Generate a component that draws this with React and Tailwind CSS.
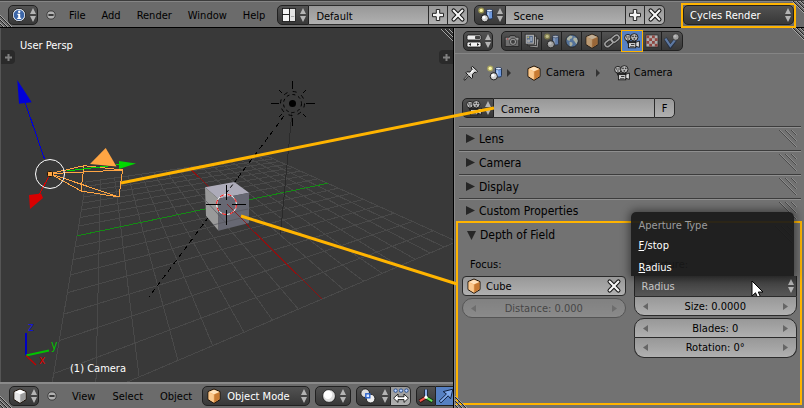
import React from 'react';

/* ---------- icons ---------- */

function Icon({ children, className = '' }) {
  return (
    <svg viewBox="0 0 16 16" className={`h-4 w-4 shrink-0 ${className}`} aria-hidden="true">
      {children}
    </svg>
  );
}

const InfoIcon = () => (
  <Icon>
    <circle cx="8" cy="8" r="6.6" fill="#e8edf5" stroke="#111" strokeWidth="0.8" />
    <circle cx="8" cy="8" r="5.3" fill="#3c66a8" />
    <path d="M6.4 6.8h2.8v4h1v1.2H6.2v-1.2h1V8h-.8z" fill="#fff" />
    <circle cx="8.2" cy="4.8" r="1.2" fill="#fff" />
  </Icon>
);

const LayoutIcon = () => (
  <Icon>
    <rect x="1.5" y="1.5" width="7" height="6" fill="#f4f4f4" stroke="#111" strokeWidth="0.8" />
    <rect x="1.5" y="7.5" width="7" height="7" fill="#f4f4f4" stroke="#111" strokeWidth="0.8" />
    <rect x="8.5" y="1.5" width="6" height="13" fill="#e4e4e4" stroke="#111" strokeWidth="0.8" />
    <path d="M10 9.500h3.200" stroke="#aaa" />
  </Icon>
);

const SceneIcon = () => (
  <Icon>
    <rect x="8.5" y="2.6" width="6" height="9.4" rx="1.5" fill="#6f9ade" stroke="#1b2b4a" strokeWidth="0.9" />
    <rect x="9.4" y="4.4" width="1.8" height="6.6" fill="#a9c5f2" />
    <ellipse cx="11.5" cy="3.6" rx="2.8" ry="1.2" fill="#dce9ff" stroke="#1b2b4a" strokeWidth="0.5" />
    <circle cx="6.8" cy="11.3" r="3.6" fill="#d2d2d2" stroke="#111" strokeWidth="0.9" />
    <circle cx="5.9" cy="10.2" r="1.5" fill="#fff" />
    <circle cx="3.2" cy="3.4" r="3" fill="#d8cf52" opacity="0.55" />
    <circle cx="3.2" cy="3.4" r="1.7" fill="#fbf6a8" />
  </Icon>
);

const CubeIcon = ({ gray = false }) => (
  <Icon>
    <path d="M8 1 14 3.6V11.6L8 15.3 2 11.6V3.6z" fill={gray ? '#ddd' : '#f2b067'} stroke="#1d1208" strokeWidth="1" strokeLinejoin="round" />
    <path d="M8 1.7 13.3 4 8 6.3 2.7 4z" fill={gray ? '#fff' : '#ffe3bd'} />
    <path d="M13.4 4.3V11.3L8.3 14.5V6.6z" fill={gray ? '#9c9c9c' : '#c77a33'} />
    <path d="M2.6 4.3V11.3L7.7 14.5V6.6z" fill={gray ? '#e6e6e6' : '#fbc98e'} />
  </Icon>
);

const MovieIcon = () => (
  <Icon>
    <g stroke="#151515" strokeWidth="0.9">
      <path d="M3 8.4h9v4.4H5.4z" fill="#8b8b8b" />
      <circle cx="3.9" cy="4.7" r="3.3" fill="#b9b9b9" />
      <circle cx="10.3" cy="4.3" r="3.7" fill="#b9b9b9" />
      <path d="M11 9.6 15.4 8v6.4L11 13z" fill="#dcdcdc" />
      <rect x="4.4" y="9.6" width="7.4" height="5.2" fill="#cfcfcf" />
    </g>
    <g fill="#3a3a3a">
      <circle cx="2.8" cy="4" r="0.8" /><circle cx="5" cy="4" r="0.8" /><circle cx="3.9" cy="6" r="0.8" />
      <circle cx="9" cy="3.3" r="0.9" /><circle cx="11.7" cy="3.3" r="0.9" /><circle cx="10.3" cy="5.8" r="0.9" />
      <path d="M7 11h3.4v1H7zM6 13h4.4v.8H6z" />
    </g>
  </Icon>
);

const PhotoCameraIcon = () => (
  <Icon>
    <path d="M1.2 4.3h4l1-1.8h4.6l1 1.8h3v9.2H1.2z" fill="#8a8a8a" stroke="#181818" strokeWidth="0.9" />
    <rect x="1.8" y="4.8" width="12.6" height="2" fill="#c4c4c4" />
    <circle cx="9" cy="8.8" r="3.6" fill="#ccc" stroke="#222" strokeWidth="0.8" />
    <circle cx="9" cy="8.8" r="2" fill="#3b3b3b" />
    <rect x="2.8" y="5.4" width="1.6" height="1.2" fill="#d33" />
  </Icon>
);

const LayersIcon = () => (
  <Icon>
    <rect x="6" y="5.5" width="8.6" height="9" fill="#c7c7c7" stroke="#222" strokeWidth="0.9" transform="rotate(6 10 10)" />
    <rect x="3.6" y="3.2" width="8.8" height="9.4" fill="#d9d9d9" stroke="#222" strokeWidth="0.9" />
    <rect x="1.2" y="1.2" width="9.2" height="10" fill="#e8e8e8" stroke="#222" strokeWidth="0.9" />
    <rect x="2.8" y="2.8" width="6" height="6.8" fill="#5f7fae" />
    <circle cx="4.6" cy="7.8" r="1.6" fill="#ddd" />
    <circle cx="4.2" cy="4.3" r="1" fill="#e6dc7a" />
    <rect x="6.2" y="4" width="1.8" height="4" fill="#b9cff0" />
  </Icon>
);

const WorldIcon = () => (
  <Icon>
    <circle cx="8" cy="8" r="6.2" fill="#5d8cc8" stroke="#161616" strokeWidth="0.9" />
    <path d="M3 5.2 6 2.6l2.6.6-.6 2-2 .8-.4 2L3.2 7zM5.5 8.800l2.700.8.4 1.800-1.600 2.200-1.300-.8zM9.800 4.400l3 .6 1 3-1.400 3.200-1.800-2.600L9.200 7z" fill="#e2ead2" />
  </Icon>
);

const ChainIcon = () => (
  <Icon>
    <g fill="none" strokeLinecap="round">
      <rect x="0.6" y="7.6" width="8.4" height="5" rx="2.5" stroke="#1c1c1c" strokeWidth="3" transform="rotate(-38 4.8 10.1)" />
      <rect x="7" y="3.2" width="8.4" height="5" rx="2.5" stroke="#1c1c1c" strokeWidth="3" transform="rotate(-38 11.2 5.7)" />
      <rect x="0.6" y="7.6" width="8.4" height="5" rx="2.5" stroke="#d4d4d4" strokeWidth="1.5" transform="rotate(-38 4.8 10.1)" />
      <rect x="7" y="3.2" width="8.4" height="5" rx="2.5" stroke="#d4d4d4" strokeWidth="1.5" transform="rotate(-38 11.2 5.7)" />
    </g>
  </Icon>
);

const CheckerIcon = () => (
  <Icon>
    <rect x="2" y="2" width="12" height="12" fill="#e6e6e6" stroke="#222" strokeWidth="0.8" />
    <g fill="#b8473f">
      {[0, 1, 2, 3].map((r) => [0, 1].map((c) => (
        <rect key={`${r}-${c}`} x={2.4 + (c * 2 + (r % 2)) * 2.8} y={2.4 + r * 2.8} width="2.8" height="2.8" />
      )))}
    </g>
  </Icon>
);

const PhysicsIcon = () => (
  <Icon>
    <path d="M1.2 5.2 6.4 13.6 12 6" fill="none" stroke="#1b2a44" strokeWidth="3.6" />
    <path d="M1.4 5.6 6.4 13 11.6 6.4" fill="none" stroke="#6d97d6" strokeWidth="2.2" />
    <circle cx="11.8" cy="4" r="3.3" fill="#cfcfcf" stroke="#222" strokeWidth="0.8" />
    <circle cx="11" cy="3.2" r="1.3" fill="#f4f4f4" />
  </Icon>
);

const PropertiesIcon = () => (
  <Icon>
    <rect x="1" y="2" width="14" height="5" rx="1.5" fill="#eee" stroke="#111" strokeWidth="0.8" />
    <rect x="9" y="3" width="5.2" height="3" rx="0.8" fill="#444" />
    <rect x="1" y="9" width="14" height="5" rx="1.5" fill="#f4f4f4" stroke="#111" strokeWidth="0.8" />
    <path d="M5 9.9v3.2L2.6 11.5zM11 9.9v3.2l2.4-1.6z" fill="#222" />
  </Icon>
);

const PinIcon = () => (
  <Icon>
    <path d="M1 15 5.6 9.8" stroke="#161616" strokeWidth="2" />
    <path d="M9.4 1.4 14.6 6.2 13.2 7.6 12 7 9.4 9.4 9.6 12.6 8.4 13.4 2.8 7.8 3.8 6.8 7 7 9.2 4.4 8.2 2.8z" fill="#d8d8d8" stroke="#161616" strokeWidth="1" strokeLinejoin="round" />
    <path d="M9.2 4.8 7.2 7.4l1 .8 2.6-2.4z" fill="#fff" />
    <path d="M1.4 14.4 5.4 10" stroke="#ddd" strokeWidth="0.9" />
  </Icon>
);

const PlusIcon = () => (
  <Icon>
    <path d="M6.3 2.5h3.4v3.8h3.8v3.4H9.7v3.8H6.3V9.7H2.5V6.3h3.8z" fill="#f5f5f5" stroke="#222" strokeWidth="1" />
  </Icon>
);

const CrossIcon = () => (
  <Icon>
    <path d="M3.6 3.6l8.8 8.8M12.4 3.6l-8.8 8.8" stroke="#161616" strokeWidth="4.2" strokeLinecap="round" />
    <path d="M3.6 3.6l8.8 8.8M12.4 3.6l-8.8 8.8" stroke="#f7f7f7" strokeWidth="2.1" strokeLinecap="round" />
  </Icon>
);

const SphereIcon = () => (
  <Icon>
    <circle cx="8" cy="8" r="6.4" fill="#dedede" stroke="#111" strokeWidth="0.8" />
    <circle cx="7" cy="6.8" r="4.2" fill="#fff" />
  </Icon>
);

const PivotIcon = () => (
  <Icon>
    <circle cx="5.2" cy="5.2" r="4.3" fill="#ddd" stroke="#111" strokeWidth="0.8" />
    <circle cx="10.6" cy="10.6" r="4.3" fill="#eee" stroke="#111" strokeWidth="0.8" />
    <rect x="5.8" y="5.8" width="4" height="4" fill="#dce8ff" stroke="#2b62c8" strokeWidth="1.4" />
  </Icon>
);

const CentersIcon = () => (
  <Icon>
    <g fill="#bcd4ff" stroke="#234a8c" strokeWidth="0.9">
      <circle cx="2.6" cy="2.6" r="1.7" /><circle cx="8" cy="2.6" r="1.7" /><circle cx="13.4" cy="2.6" r="1.7" />
    </g>
    <path d="M0.6 10.2 5 6v2.8h6V6l4.4 4.2L11 14.4v-2.8H5v2.8z" fill="#fff" stroke="#111" strokeWidth="0.9" />
  </Icon>
);

const AxesIcon = () => (
  <Icon>
    <path d="M8 9 8 1.4" stroke="#10203c" strokeWidth="3.4" /><path d="M8 9 8 1.6" stroke="#9cc0ff" strokeWidth="1.8" />
    <path d="M8 9.4 1.6 13.4" stroke="#3d0c0c" strokeWidth="3.6" /><path d="M8 9.4 1.8 13.2" stroke="#f0574d" strokeWidth="2" />
    <path d="M8 9.4 14.4 13.4" stroke="#0d330d" strokeWidth="3.6" /><path d="M8 9.4 14.2 13.2" stroke="#6ade5b" strokeWidth="2" />
    <circle cx="8" cy="9.2" r="1.6" fill="#fff" />
  </Icon>
);

const ArrowIcon = () => (
  <Icon>
    <path d="M1.2 13 8.4 6 5.2 3.6 14.8 1.2 12.6 10.8 10.2 7.8 3 14.8z" fill="#7fa9ec" stroke="#0f2040" strokeWidth="1" strokeLinejoin="round" />
  </Icon>
);

const UpDown = () => (
  <svg viewBox="0 0 6 14" className="h-[14px] w-[6px] shrink-0" aria-hidden="true">
    <path d="M3 0 6 6H0zM3 14 0 8h6z" fill="#b4b4b4" />
  </svg>
);

const Collapse = () => (
  <button type="button" aria-label="Collapse menus" className="flex h-[10px] w-[10px] items-center justify-center">
    <svg viewBox="0 0 10 10" className="h-[10px] w-[10px]">
      <circle cx="5" cy="5" r="4.1" fill="#b2b2b2" stroke="#2e2e2e" strokeWidth="0.8" />
      <path d="M2.4 5h5.2" stroke="#111" strokeWidth="1.5" />
    </svg>
  </button>
);

const Hatch = ({ className = '', flip = false }) => (
  <svg viewBox="0 0 12 12" className={`pointer-events-none absolute h-3 w-3 ${className}`} aria-hidden="true">
    <g transform={flip ? 'rotate(180 6 6)' : undefined} strokeWidth="1">
      <path d="M0 1 11 12M0 5 7 12M0 9 3 12" stroke="#242424" />
      <path d="M0 0 12 12M0 4 8 12M0 8 4 12" stroke="#a6a6a6" />
    </g>
  </svg>
);

/* ---------- controls ---------- */

const dark = 'border border-[#212121] bg-linear-to-b from-[#525252] to-[#383838] text-white';
const light = 'border-[#2b2b2b] bg-linear-to-b from-[#989898] to-[#b0b0b0] text-black';

function IconMenu({ label, children, className = 'w-[30px] rounded-[5px]' }) {
  return (
    <button type="button" aria-label={label} className={`flex h-5 shrink-0 items-center justify-center gap-[3px] ${dark} ${className}`}>
      {children}
      <UpDown />
    </button>
  );
}

function MenuBar({ items, className = '' }) {
  return (
    <nav className={`flex ${className}`}>
      {items.map((item) => (
        <button key={item} type="button" className="px-2 pt-[2px] leading-5">{item}</button>
      ))}
    </nav>
  );
}

function DataBlock({ label, value, icon }) {
  return (
    <div className="flex h-5 shrink-0">
      <IconMenu label={`Browse ${label}`} className="w-8 rounded-l-[5px]">{icon}</IconMenu>
      <input aria-label={label} defaultValue={value} className={`h-5 w-[119px] border-y px-[7px] pt-[2px] outline-none ${light}`} />
      <button type="button" aria-label={`Add ${label}`} className={`flex w-5 items-center justify-center border ${light}`}><PlusIcon /></button>
      <button type="button" aria-label={`Delete ${label}`} className={`flex w-5 items-center justify-center rounded-r-[5px] border border-l-0 ${light}`}><CrossIcon /></button>
    </div>
  );
}

function NumberField({ label, value, shape, disabled = false }) {
  return (
    <div className={`relative flex h-5 items-center ${light} ${shape} ${disabled ? 'opacity-40' : ''}`}>
      <input
        aria-label={label}
        defaultValue={`${label}: ${value}`}
        disabled={disabled}
        className="w-full bg-transparent pt-[2px] text-center outline-none"
      />
      <svg viewBox="0 0 5 7" className="absolute left-2 h-[7px] w-[5px]"><path d="M5 0v7L0 3.500z" fill="#666" /></svg>
      <svg viewBox="0 0 5 7" className="absolute right-2 h-[7px] w-[5px]"><path d="M0 0v7l5-3.500z" fill="#666" /></svg>
    </div>
  );
}

/* ---------- 3D viewport ---------- */

const project = (x, y) => {
  const d = 1 - 0.0545 * x + 0.02414 * y;
  return [(226.5 - 5.61 * x + 20.55 * y) / d, (204.5 - 4.48 * x + 1.775 * y) / d];
};

const segment = (a, b) => `M${project(...a).join(' ')}L${project(...b).join(' ')}`;

const steps = Array.from({ length: 17 }, (_, i) => i - 8).filter((n) => n !== 0);
const gridPath = steps.map((n) => segment([n, -8], [n, 8]) + segment([-8, n], [8, n])).join('');

function Scene3D() {
  return (
    <svg viewBox="0 28 454 354" preserveAspectRatio="xMinYMax meet" className="absolute inset-0 h-full w-full" aria-label="3D scene" role="img">
      <g fill="none" shapeRendering="crispEdges">
        <path d={gridPath} stroke="#494949" />
        <path d={segment([0, -8], [0, 8])} stroke="#158a15" />
        <path d={segment([-8, 0], [8, 0])} stroke="#8c1212" />
        <path d="M292 112 280.500 234" stroke="#2a2a2a" />
        <path d="M284 116 149 297" stroke="#000" strokeDasharray="5 4" />
      </g>

      <path d="M205 187.300 234.300 182 249 192.700 218.300 198.700z" fill="#adabb9" />
      <path d="M205 187.300 218.300 198.700 218.500 230.700 206 215.700z" fill="#9a9a9a" />
      <path d="M218.300 198.700 249 192.700V223L218.500 230.700z" fill="#676873" />
      <path d="M206 201 226 223M213 225l36-9M220 215l28-6" stroke="#55555c" strokeWidth="0.7" fill="none" />
      <path d="M227 204 249 226" stroke="#8c1212" strokeWidth="0.8" />
      <path d="M237 179 227 192" stroke="#000" strokeDasharray="4 3" />
      <g fill="none">
        <circle cx="226.500" cy="204.500" r="10" stroke="#fff" />
        <circle cx="226.500" cy="204.500" r="10" stroke="#f00" strokeDasharray="4 4" />
        <path d="M206 204.500h15M232 204.500h14M226.500 185v15M226.500 210v15" stroke="#000" shapeRendering="crispEdges" />
      </g>

      <g stroke="#000" fill="none">
        <circle cx="292.500" cy="103.500" r="3.500" fill="#000" stroke="none" />
        <circle cx="292.500" cy="103.500" r="9" strokeDasharray="3 3" />
        <circle cx="292.500" cy="103.500" r="12" strokeDasharray="4 5.400" />
        <path d="M292.500 81v8M292.500 118v8M271 103.500h8M306 103.500h9M279 90l3 3M306 90l-3 3M279 117l3-3M306 117l-3-3" />
      </g>

      <g fill="none" shapeRendering="crispEdges">
        <path d="M84 165.700 122.500 170 119 197 81 191zM50 173.700 84 165.700M50 173.700 122.500 170M50 173.700 119 197M50 173.700 81 191" stroke="#ffa543" />
        <path d="M67 171 120 164.500" stroke="#00d800" />
        <path d="M44.500 159 25 102" stroke="#0000d8" />
        <path d="M49 176 39 195" stroke="#d80000" />
      </g>
      <path d="M105.700 148 90 164 116.500 166.500z" fill="#ffa543" />
      <path d="M119 161v8l17-5.500z" fill="#00d800" />
      <path d="M17.300 80 19 103.700 31.700 102.300z" fill="#0000d8" />
      <path d="M29 195 41 193.500 43 198 30 209z" fill="#d80000" />
      <circle cx="50" cy="174" r="14.500" fill="none" stroke="#fff" />
      <rect x="47.500" y="171.500" width="5" height="5" rx="1" fill="#ffa543" stroke="#221100" />

      <g strokeWidth="2" fill="none">
        <path d="M26 355.500V333" stroke="#0000c4" />
        <path d="M26 355.500 49 350.500" stroke="#00c400" />
        <path d="M26 355.500 36 365" stroke="#c40000" strokeWidth="1.300" />
      </g>
      <g fontSize="12">
        <text x="28" y="331" fill="#1414d8">z</text>
        <text x="51" y="349" fill="#00c400">y</text>
        <text x="39" y="364" fill="#d80000">x</text>
      </g>
    </svg>
  );
}

const EdgeTab = ({ className }) => (
  <button type="button" aria-label="Show shelf" className={`absolute top-[22px] flex h-[14px] w-[14px] items-center justify-center bg-[#2a2a2a] ${className}`}>
    <svg viewBox="0 0 7 7" className="h-[7px] w-[7px]"><path d="M3.500 0v7M0 3.500h7" stroke="#808080" strokeWidth="2" /></svg>
  </button>
);

function Viewport() {
  return (
    <section className="flex min-w-0 flex-col border-r border-black">
      <div className="relative min-h-0 flex-1 overflow-hidden border-l border-[#555] bg-[#393939] text-white">
        <div className="absolute inset-y-0 -left-px -right-px"><Scene3D /></div>
        <p className="absolute left-[19px] top-[10px] leading-4">User Persp</p>
        <p className="absolute bottom-[5px] left-[69px] leading-4">(1) Camera</p>
        <EdgeTab className="left-0 rounded-r" />
        <EdgeTab className="right-0 rounded-l" />
        <Hatch className="right-0 top-px" flip />
      </div>
      <footer className="relative flex h-[26px] shrink-0 items-center overflow-hidden border-t-2 border-[#8a8a8a] bg-[#6b6b6b] pl-[9px]">
        <IconMenu label="Editor type"><CubeIcon gray /></IconMenu>
        <div className="ml-2 mr-[7px] flex"><Collapse /></div>
        <MenuBar items={['View', 'Select', 'Object']} className="gap-px" />
        <div className="relative ml-[2px] flex h-5 w-[108px] shrink-0 items-center">
          <select aria-label="Mode" className={`h-5 w-full appearance-none rounded-[5px] pl-6 pt-[2px] outline-none ${dark}`}>
            <option>Object Mode</option>
          </select>
          <span className="pointer-events-none absolute left-1"><CubeIcon /></span>
          <span className="pointer-events-none absolute right-[3px]"><UpDown /></span>
        </div>
        <IconMenu label="Viewport shading" className="ml-[5px] w-9 gap-2 rounded-[5px]"><SphereIcon /></IconMenu>
        <div className="ml-[5px] flex">
          <IconMenu label="Pivot point" className="w-[35px] gap-[6px] rounded-l-[5px]"><PivotIcon /></IconMenu>
          <button type="button" aria-label="Manipulate centers" className={`flex h-5 w-5 items-center justify-center rounded-r-[5px] border border-l-0 ${light}`}><CentersIcon /></button>
        </div>
        <div className="ml-[5px] flex">
          <button type="button" aria-label="Manipulator" className={`flex h-5 w-5 items-center justify-center rounded-l-[5px] ${dark}`}><AxesIcon /></button>
          <button type="button" aria-label="Translate" className="flex h-5 w-5 items-center justify-center border-y border-[#212121] bg-[#5680c2]"><ArrowIcon /></button>
        </div>
        <Hatch className="bottom-0 left-0" />
      </footer>
    </section>
  );
}

/* ---------- properties editor ---------- */

const PanelGrip = () => (
  <svg viewBox="0 0 18 18" className="h-[18px] w-[18px]" aria-hidden="true">
    <path d="M0 0 17 17M6 0 17 11M12 0 17 5" stroke="#4b4b4b" />
    <path d="M1 0 18 17M7 0 18 11M13 0 18 5" stroke="#8d8d8d" />
  </svg>
);

function PanelHeader({ title, open = false }) {
  return (
    <button type="button" aria-expanded={open} className="flex h-full w-full items-center justify-between pr-1 text-[12px]">
      <span className="flex items-center gap-1">
        <svg viewBox="0 0 9 9" className="h-[9px] w-[9px]">
          <path d={open ? 'M0 0h9L4.500 9z' : 'M0 0v9l9-4.500z'} fill="#262626" />
        </svg>
        {title}
      </span>
      <PanelGrip />
    </button>
  );
}

const tabs = [
  ['Render', PhotoCameraIcon],
  ['Render Layers', LayersIcon],
  ['Scene', SceneIcon],
  ['World', WorldIcon],
  ['Object', CubeIcon],
  ['Constraints', ChainIcon],
  ['Data', MovieIcon],
  ['Texture', CheckerIcon],
  ['Physics', PhysicsIcon],
];

const Crumb = () => (
  <svg viewBox="0 0 4 8" className="h-2 w-1"><path d="M0 0v8l4-4z" fill="#333" /></svg>
);

function DepthOfField() {
  return (
    <section className="-mt-px mb-[3px] ml-px mr-[2px] flex-1 border-2 border-[#ffb400] pr-[3px]">
      <div className="h-6 pl-[9px]"><PanelHeader title="Depth of Field" open /></div>
      <div className="grid grid-cols-2 gap-2 pl-1">
        <div className="pt-[10px]">
          <label htmlFor="focus" className="block pb-[3px] pl-2 leading-4">Focus:</label>
          <div className={`flex h-5 items-center gap-1 rounded-[4px] border px-[3px] ${light}`}>
            <CubeIcon />
            <input id="focus" defaultValue="Cube" className="min-w-0 flex-1 bg-transparent pt-[2px] outline-none" />
            <button type="button" aria-label="Clear focus"><CrossIcon /></button>
          </div>
          <div className="pt-[2px]">
            <NumberField label="Distance" value="0.000" shape="border rounded-full" disabled />
          </div>
        </div>
        <div className="pt-[10px]">
          <label htmlFor="aperture" className="block pb-[3px] pl-2 leading-4">Aperture:</label>
          <div className="relative flex h-5 items-center">
            <select id="aperture" className="h-5 w-full appearance-none border-x border-[#212121] bg-linear-to-b from-[#3c3c3c] to-[#565656] pl-[7px] pt-[2px] text-[#c8c8c8] outline-none">
              <option>Radius</option>
              <option>F/stop</option>
            </select>
            <span className="pointer-events-none absolute right-[3px]"><UpDown /></span>
            <div role="menu" aria-label="Aperture Type" className="absolute bottom-full -left-[3px] right-[3px] h-16 rounded-t-[5px] bg-[#191919]/92 pl-2 text-white shadow-[0_0_8px_2px_rgba(0,0,0,0.45)]">
              <p className="h-[23px] pt-1 leading-5 text-[#9c9c9c]">Aperture Type</p>
              <button type="button" role="menuitem" className="block leading-[22px]"><u>F</u>/stop</button>
              <button type="button" role="menuitem" className="block leading-[22px]"><u>R</u>adius</button>
            </div>
            <svg viewBox="0 0 13 20" className="pointer-events-none absolute left-[117px] top-1 h-5 w-[13px]" aria-hidden="true">
              <path d="M1 1v15l3.500-3.200L7 18.500l2.700-1.200L7.300 12H12z" fill="#fff" stroke="#000" />
            </svg>
          </div>
          <NumberField label="Size" value="0.0000" shape="border rounded-b-[10px]" />
          <div className="pt-[2px]">
            <NumberField label="Blades" value="0" shape="border rounded-t-[10px]" />
            <NumberField label="Rotation" value="0°" shape="border border-t-0 rounded-b-[10px]" />
          </div>
        </div>
      </div>
    </section>
  );
}

function Properties() {
  return (
    <section className="relative flex min-w-0 flex-col border-l border-[#8a8a8a] bg-[#727272]">
      <header className="flex h-[26px] shrink-0 items-center border-b border-[#858585] bg-[#6b6b6b] pl-2">
        <IconMenu label="Editor type"><PropertiesIcon /></IconMenu>
        <div className="ml-2 flex h-5 rounded-[5px] border border-[#212121] bg-linear-to-b from-[#525252] to-[#383838]">
          {tabs.map(([name, Glyph]) => (
            <button
              key={name}
              type="button"
              aria-label={name}
              className={name === 'Data'
                ? '-my-px flex w-5 items-center justify-center bg-[#5680c2] outline outline-[#ffb400]'
                : 'flex w-5 items-center justify-center border-r border-[#212121] last:border-r-0'}
            >
              <span className={name === 'Data' ? 'flex' : 'flex opacity-65'}><Glyph /></span>
            </button>
          ))}
        </div>
      </header>
      <div className="flex h-9 shrink-0 items-center pl-2 pt-[2px]">
        <PinIcon />
        <span className="mx-2 flex items-center gap-1"><SceneIcon /><Crumb /></span>
        <a href="#object" className="ml-[7px] flex items-center gap-1"><CubeIcon />Camera</a>
        <span className="ml-[11px] mr-[14px] flex"><Crumb /></span>
        <a href="#data" className="flex items-center gap-1"><MovieIcon />Camera</a>
      </div>
      <div className="flex h-9 shrink-0 items-center pl-[7px]">
        <IconMenu label="Browse camera data" className="w-8 rounded-l-[5px]"><MovieIcon /></IconMenu>
        <input aria-label="Camera data name" defaultValue="Camera" className={`h-5 w-[160px] border-y px-[7px] pt-[2px] outline-none ${light}`} />
        <button type="button" aria-label="Fake user" className={`h-5 w-[21px] rounded-r-[5px] border pt-[2px] ${light}`}>F</button>
      </div>
      {['Lens', 'Camera', 'Display', 'Custom Properties'].map((title) => (
        <div key={title} className="ml-1 mr-[3px] h-6 shrink-0 border-t border-[#3c3c3c] pl-[7px] shadow-[inset_0_1px_0_#8f8f8f]">
          <PanelHeader title={title} />
        </div>
      ))}
      <DepthOfField />
      <Hatch className="right-0 top-0" flip />
      <Hatch className="bottom-0 left-0" />
    </section>
  );
}

/* ---------- application ---------- */

export default function App() {
  return (
    <div className="relative flex h-screen flex-col overflow-hidden bg-[#393939] font-['DejaVu_Sans_Condensed','DejaVu_Sans',sans-serif] text-[11px] text-black">
      <header className="relative flex h-7 shrink-0 items-center border-t border-b border-t-[#3c3c3c] border-b-black bg-[#6b6b6b] pl-2 pt-[2px] shadow-[inset_0_1px_0_#858585]">
        <IconMenu label="Editor type"><InfoIcon /></IconMenu>
        <div className="ml-2 mr-[5px] flex"><Collapse /></div>
        <MenuBar items={['File', 'Add', 'Render', 'Window', 'Help']} />
        <div className="ml-1 flex gap-[6px]">
          <DataBlock label="Screen layout" value="Default" icon={<LayoutIcon />} />
          <DataBlock label="Scene" value="Scene" icon={<SceneIcon />} />
        </div>
        <div className="relative ml-auto mr-2 flex h-[25px] w-[115px] shrink-0 items-center border-2 border-[#ffb400]">
          <select aria-label="Render engine" className={`h-5 w-full appearance-none rounded-[5px] pl-[6px] pt-[2px] outline-none ${dark}`}>
            <option>Cycles Render</option>
          </select>
          <span className="pointer-events-none absolute right-[3px]"><UpDown /></span>
        </div>
        <Hatch className="bottom-0 left-0" />
        <Hatch className="right-0 top-0" flip />
      </header>
      <main className="grid min-h-0 flex-1 grid-cols-[454fr_350fr]">
        <Viewport />
        <Properties />
      </main>
      <svg viewBox="0 0 804 408" preserveAspectRatio="none" className="pointer-events-none absolute inset-0 h-full w-full" aria-hidden="true">
        <path d="M121 183 494 108M241 216 457 284" stroke="#ffb400" strokeWidth="3" fill="none" />
      </svg>
    </div>
  );
}
